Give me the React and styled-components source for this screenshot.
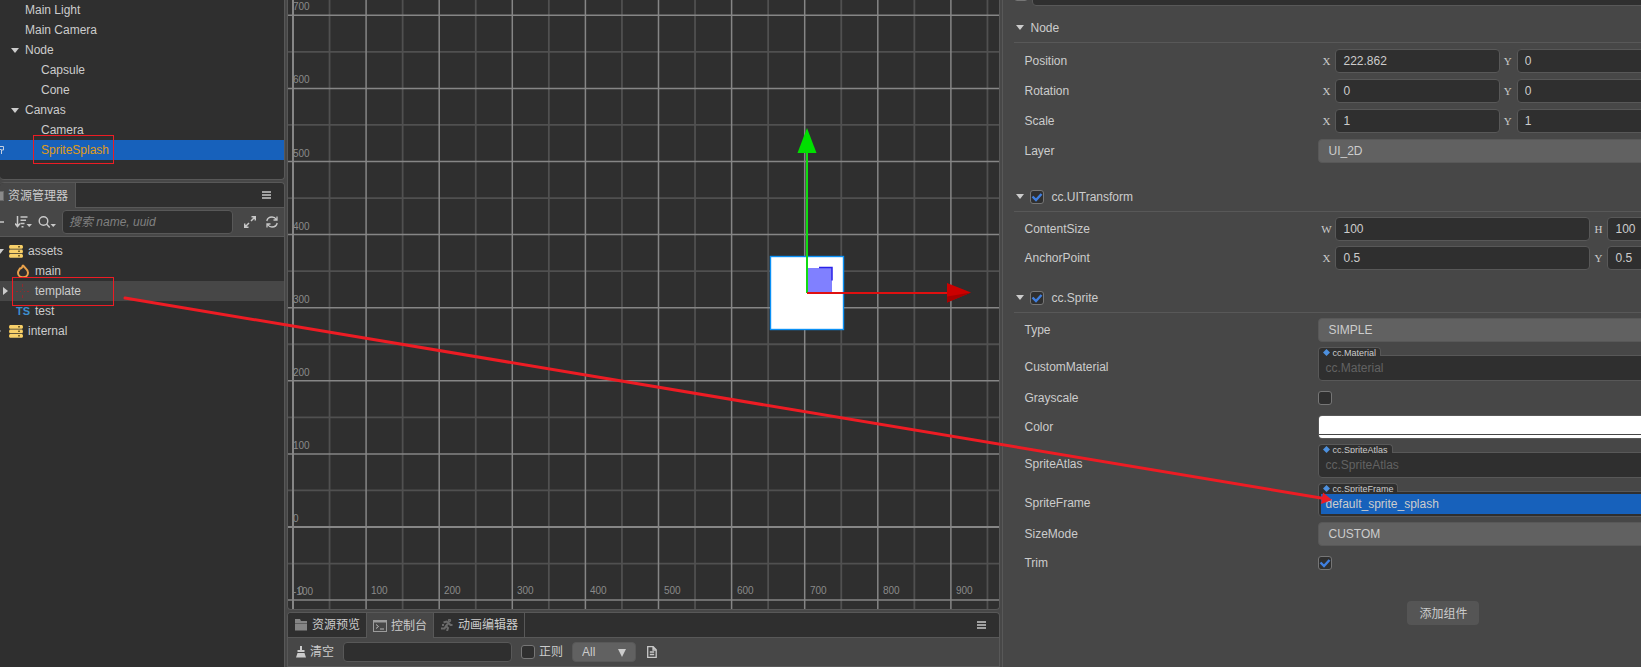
import React from 'react';
import styled, { createGlobalStyle, css } from 'styled-components';

const C = {
  dark: '#2f2f2f',
  panel: '#474747',
  line: '#585858',
  control: '#616161',
  text: '#cccccc',
  dim: '#626262',
  blue: '#1761bb',
  accent: '#3f7fe0',
  red: '#ed1c24',
};

const GlobalStyle = createGlobalStyle`
  *, *::before, *::after { box-sizing: border-box; }
  body { margin: 0; background: ${C.panel}; }
  body, input, button, select {
    font-family: "Liberation Sans", "Noto Sans CJK SC", sans-serif;
    font-size: 12px;
    color: ${C.text};
  }
  svg { display: block; flex: none; }
`;

/* ---------- Shell ---------- */

const Editor = styled.div`
  position: relative;
  display: flex;
  gap: 2px;
  height: 100vh;
  overflow: hidden;
  background: ${C.panel};
  line-height: 20px;
`;

const SideColumn = styled.div`
  flex: 0 0 285px;
  display: flex;
  flex-direction: column;
  gap: 2px;
  min-width: 0;
`;

const CenterColumn = styled.main`
  flex: 714 1 0;
  display: flex;
  flex-direction: column;
  gap: 2px;
  min-width: 0;
`;

const Panel = styled.section`
  background: ${C.dark};
  border: 1px solid ${C.line};
  border-top-width: ${(p) => (p.$openTop ? 0 : '1px')};
  border-bottom-width: ${(p) => (p.$openTop ? '1px' : 0)};
  border-left-width: ${(p) => (p.$openLeft ? 0 : '1px')};
  border-radius: ${(p) => (p.$openTop ? '0 0 4px 4px' : '4px 4px 0 0')};
  overflow: hidden;
  min-width: 0;
  ${(p) => p.$grow && css`flex: 1; min-height: 0;`}
`;

const TabBar = styled.div`
  display: flex;
  height: 25px;
  border-bottom: 1px solid ${C.line};
`;

const Tab = styled.button`
  display: flex;
  align-items: center;
  gap: 4px;
  height: ${(p) => (p.$active ? '25px' : '24px')};
  padding: 0 6px;
  border: 0;
  border-right: 1px solid ${C.line};
  background: ${(p) => (p.$active ? C.panel : C.dark)};
  line-height: 20px;
  white-space: nowrap;
  ${(p) => p.$cropped && css`margin-left: -12px; padding-right: 7px;`}
`;

const IconButton = styled.button`
  display: flex;
  align-items: center;
  padding: 0;
  border: 0;
  background: none;
  gap: 4px;
  line-height: 20px;
  white-space: nowrap;
`;

const MenuButton = styled(IconButton)`
  margin-left: auto;
  margin-right: 13px;
`;

const CreateButton = styled(IconButton)`
  margin-left: -6px;
  margin-right: 5px;
`;

const RefreshButton = styled(IconButton)`
  margin-left: 4px;
`;

const LogButton = styled(IconButton)`
  margin-left: 2px;
`;

const Toolbar = styled.div`
  display: flex;
  align-items: center;
  height: 29px;
  border-bottom: 1px solid ${C.line};
  background: ${C.panel};
`;

const AssetToolbar = styled(Toolbar)`
  padding-right: 6px;
  gap: 6px;
`;

const ConsoleToolbar = styled(Toolbar)`
  padding-left: 8px;
  gap: 9px;
`;

const TextInput = styled.input`
  height: ${(p) => (p.$small ? '20px' : '24px')};
  min-width: 0;
  padding: 0 7px;
  border: 1px solid ${C.line};
  border-radius: 4px;
  background: ${C.dark};
  outline: none;
  &::placeholder { color: #808080; font-style: italic; opacity: 1; }
`;

const SearchInput = styled(TextInput)`
  flex: 1;
  padding: 0 6px;
  margin-right: 5px;
`;

const FilterInput = styled(TextInput)`
  width: 169px;
`;

/* ---------- Trees ---------- */

const Tree = styled.ul`
  margin: 0;
  padding: ${(p) => p.$pad};
  list-style: none;
`;

const TreeRow = styled.li`
  position: relative;
  display: flex;
  align-items: center;
  height: 20px;
  gap: ${(p) => (p.$asset ? '5px' : '6px')};
  background: ${(p) => (p.$selected ? C.blue : p.$hover ? C.panel : 'transparent')};
  color: ${(p) => (p.$selected ? '#e09c16' : C.text)};
  &::before {
    content: '';
    flex: none;
    width: 0;
    margin-left: ${(p) => (p.$asset ? p.$depth * 7 - 9 : p.$depth * 16 + 5)}px;
  }
`;

const Slot = styled.span`
  display: flex;
  flex: none;
  width: ${(p) => p.$w}px;
  height: 20px;
  align-items: center;
`;

const RowMark = styled.span`
  position: absolute;
  left: 0;
  top: 6px;
`;

const ScriptBadge = styled.b`
  color: #3d8fd1;
  font-size: 11px;
`;

/* ---------- Controls ---------- */

const CheckWrap = styled.span`
  position: relative;
  display: inline-block;
  width: 14px;
  height: 14px;
  flex: none;
  svg { position: absolute; left: 0; top: 0; pointer-events: none; }
`;

const CheckInput = styled.input`
  appearance: none;
  display: block;
  width: 14px;
  height: 14px;
  margin: 0;
  border: 1px solid #767676;
  border-radius: 3px;
  background: ${C.dark};
`;

const SelectBox = styled.select`
  appearance: none;
  width: 100%;
  height: ${(p) => (p.$small ? '20px' : '24px')};
  padding: 0 9px;
  border: 1px solid ${C.line};
  border-radius: 4px;
  background: ${C.control};
  outline: none;
`;

const LevelWrap = styled.span`
  position: relative;
  width: 64px;
  svg { position: absolute; right: 10px; top: 7px; pointer-events: none; }
`;

const RegexLabel = styled.label`
  display: flex;
  align-items: center;
  gap: 4px;
`;

/* ---------- Inspector ---------- */

const Inspector = styled.aside`
  flex: 638 1 0;
  min-width: 0;
  overflow: hidden;
  border-left: 1px solid ${C.line};
`;

const InspectorBody = styled.div`
  min-width: 880px;
  padding: 0 11px;
`;

const NameBar = styled.div`
  display: flex;
  align-items: center;
  gap: 4px;
  margin-top: -18px;
  ${TextInput} { flex: 1; }
`;

const Component = styled.section`
  margin-top: ${(p) => p.$space}px;
`;

const ComponentHead = styled.header`
  display: flex;
  align-items: center;
  height: 30px;
  padding-left: 2px;
  gap: 6px;
  border-bottom: 1px solid ${C.line};
`;

const ComponentTitle = styled.label`
  padding-left: ${(p) => (p.$inset ? '1px' : 0)};
`;

const Fields = styled.div`
  display: flex;
  flex-direction: column;
  gap: ${(p) => p.$gap}px;
  padding: ${(p) => p.$gap}px 10px 0;
`;

const Field = styled.div`
  display: grid;
  grid-template-columns: 294px 1fr;
  align-items: center;
  min-height: 24px;
`;

const FieldLabel = styled.label`
  padding-top: ${(p) => (p.$tagged ? '5px' : 0)};
`;

const Vector = styled.div`
  display: grid;
  grid-template-columns: repeat(${(p) => p.$columns}, 1fr);
`;

const Axis = styled.label`
  display: grid;
  grid-template-columns: 17px 1fr;
  align-items: center;
  span {
    padding-right: 1px;
    text-align: center;
    font-family: "Liberation Serif", serif;
    font-size: 11px;
  }
`;

const AssetField = styled.div`
  display: flex;
  flex-direction: column;
  align-items: flex-start;
`;

const AssetTag = styled.span`
  position: relative;
  z-index: 1;
  display: flex;
  align-items: center;
  gap: 2px;
  height: 9px;
  padding: 1px 4px 0;
  border: 1px solid ${C.line};
  border-bottom: 0;
  border-radius: 4px 4px 0 0;
  background: ${C.dark};
  font-size: 9px;
  line-height: 12px;
  overflow: hidden;
`;

const AssetBox = styled.div`
  width: 100%;
  height: 26px;
  margin-top: -1px;
  padding: 2px;
  border: 1px solid ${C.line};
  border-radius: 0 4px 4px 4px;
  background: ${C.dark};
`;

const AssetInput = styled.input`
  display: block;
  width: 100%;
  height: 20px;
  padding: 0 4px;
  border: 0;
  outline: none;
  background: ${(p) => (p.$active ? C.blue : 'transparent')};
  &::placeholder { color: ${C.dim}; opacity: 1; }
`;

const ColorBox = styled.div`
  display: flex;
  flex-direction: column;
  gap: 1px;
  border: 1px solid ${C.line};
  border-radius: 4px;
  overflow: hidden;
`;

const ColorInput = styled.input`
  appearance: none;
  display: block;
  width: 100%;
  height: 18px;
  padding: 0;
  border: 0;
  background: #fff;
  &::-webkit-color-swatch-wrapper { padding: 0; }
  &::-webkit-color-swatch { border: 0; }
`;

const AlphaBar = styled.div`
  height: 3px;
  background: #fff;
`;

const AddRow = styled.div`
  display: flex;
  justify-content: center;
  margin-top: 26px;
`;

const AddButton = styled.button`
  height: 24px;
  padding: 0 12px 2px;
  border: 0;
  border-radius: 4px;
  background: #555555;
`;

/* ---------- Icons ---------- */

const ArrowDown = () => (
  <svg width="8" height="5"><path d="M0 0h8L4 5z" fill="#cccccc" /></svg>
);
const ArrowRight = () => (
  <svg width="5" height="8"><path d="M0 0v8l5-4z" fill="#cccccc" /></svg>
);
const Burger = () => (
  <svg width="9" height="8"><path d="M0 1h9M0 4h9M0 7h9" stroke="#c8c8c8" strokeWidth="1.6" /></svg>
);
const PlusIcon = () => (
  <svg width="10" height="10"><path d="M5 0v10M0 5h10" stroke="#c8c8c8" strokeWidth="1.6" /></svg>
);
const SortIcon = () => (
  <svg width="17" height="12" fill="none" stroke="#c8c8c8" strokeWidth="1.5">
    <path d="M2.5 0v10M0 7.5l2.5 3 2.5-3M5.5 1h7M5.5 4.3h5.5M5.5 7.5h4M6.5 10.7h2" />
    <path d="M11.5 8h5.5l-2.75 3z" fill="#c8c8c8" stroke="none" />
  </svg>
);
const SearchIcon = () => (
  <svg width="18" height="12" fill="none" stroke="#c8c8c8" strokeWidth="1.4">
    <circle cx="5.500" cy="5" r="4.3" />
    <path d="M8.5 8l3.2 3.5" />
    <path d="M12.5 8h5.5l-2.75 3z" fill="#c8c8c8" stroke="none" />
  </svg>
);
const ExpandIcon = () => (
  <svg width="12" height="12" fill="none" stroke="#c8c8c8" strokeWidth="1.5">
    <path d="M7.5.7h3.8v3.800M11 1L7 5M4.500 11.300H.7V7.500M1 11l4-4" />
  </svg>
);
const RefreshIcon = () => (
  <svg width="12" height="12" fill="none" stroke="#c8c8c8" strokeWidth="1.3">
    <path d="M.8 5C1.300 2.500 3.300 1 6 1c1.800 0 3.300.8 4.400 2.500M11 .5v3.500H7.500M11.200 7c-.5 2.500-2.500 4-5.200 4-1.800 0-3.300-.8-4.400-2.500M1 11.500V8h3.500" />
  </svg>
);
const DatabaseIcon = () => (
  <svg width="14" height="13">
    {[0, 4.5, 9].map((y) => (
      <g key={y}>
        <rect x="0" y={y + 1} width="14" height="2" fill="#d9ac3f" />
        <rect x="0.5" y={y} width="13" height="3.700" rx=".5" fill="#f7d06a" />
        <rect x="9" y={y + 1} width="2" height="1.5" fill="#7a6326" />
      </g>
    ))}
  </svg>
);
const FlameIcon = () => (
  <svg width="14" height="14" fill="none" stroke="#e9a24b" strokeWidth="2">
    <path d="M7 1C7.300 3 12 4.800 12 8.700a5 4.500 0 0 1-10 0C2 6.800 3.300 6 4 4.500 5.300 4.500 6.500 3 7 1z" />
  </svg>
);
const CrossDashes = () => (
  <svg width="14" height="14" stroke="#8e2a2e" strokeWidth="1">
    <path d="M6.500 0v3M6.500 11v3M0 7.500h2M11 7.500h2M4 7.500h1M8 7.500h1M6.500 5v1" />
  </svg>
);
const FolderIcon = () => (
  <svg width="14" height="12">
    <path d="M1 0h5l1 2h6v9.500H1z" fill="#858585" />
    <path d="M1 4.500h12" stroke="#5e5e5e" />
  </svg>
);
const ConsoleIcon = () => (
  <svg width="14" height="12" fill="none" stroke="#9c9c9c">
    <rect x=".5" y=".5" width="13" height="11" />
    <path d="M0 1.500h14" strokeWidth="2" />
    <path d="M3 4.500l2.500 2L3 8.500M7 9h4" stroke="#b5b5b5" />
  </svg>
);
const RunnerIcon = () => (
  <svg width="14" height="12" fill="none" stroke="#6a6a6a" strokeWidth="2">
    <circle cx="9.500" cy="1.500" r=".7" />
    <path d="M3.500 3.500L6.500 2.500 8.500 4 6 7l2 2-1 3M6 7L4.500 9.500H1M8.500 4l2 2h2M2 6h2" />
  </svg>
);
const BrushIcon = () => (
  <svg width="10" height="12">
    <path d="M4 0h2v4h2.500v2h-7V4H4zM1.500 7h7L10 11.500H0z" fill="#cccccc" />
  </svg>
);
const FileIcon = () => (
  <svg width="10" height="12" fill="none" stroke="#c8c8c8" strokeWidth="1.3">
    <path d="M.7.7h5.500l3 3v7.600H.7zM6 .7v3.300h3M2.800 6h4.400M2.800 8.500h4.400" />
  </svg>
);
const TabSquare = () => (
  <svg width="10" height="10"><rect x=".5" y=".5" width="9" height="9" fill="#8a8a8a" stroke="#6a6a6a" /></svg>
);
const Diamond = () => (
  <svg width="7" height="7"><path d="M3.500 0L7 3.500 3.500 7 0 3.500z" fill="#4d90de" /></svg>
);

/* ---------- Pieces ---------- */

function Checkbox({ id, checked, label }) {
  return (
    <CheckWrap>
      <CheckInput type="checkbox" id={id} defaultChecked={checked} aria-label={label} />
      {checked && (
        <svg width="14" height="14">
          <path d="M2.500 6.500L6 10l5.500-6" fill="none" stroke={C.accent} strokeWidth="2.400" />
        </svg>
      )}
    </CheckWrap>
  );
}

const hierarchy = [
  { name: 'Main Light', depth: 0 },
  { name: 'Main Camera', depth: 0 },
  { name: 'Node', depth: 0, open: true },
  { name: 'Capsule', depth: 1 },
  { name: 'Cone', depth: 1 },
  { name: 'Canvas', depth: 0, open: true },
  { name: 'Camera', depth: 1 },
  { name: 'SpriteSplash', depth: 1, selected: true },
];

const assets = [
  { name: 'assets', depth: 0, arrow: <ArrowDown />, icon: <DatabaseIcon /> },
  { name: 'main', depth: 1, icon: <FlameIcon /> },
  { name: 'template', depth: 1, arrow: <ArrowRight />, icon: <CrossDashes />, hover: true },
  { name: 'test', depth: 1, icon: <ScriptBadge>TS</ScriptBadge> },
  { name: 'internal', depth: 0, arrow: <ArrowRight />, icon: <DatabaseIcon /> },
];

const STEP = 73.1;
const ORIGIN = { x: 5, y: 527 };
const steps = Array.from({ length: 60 }, (_, i) => i);

const SceneCanvas = styled.svg`
  width: 100%;
  height: 100%;
  font-size: 10px;
  fill: #8a8a8a;
`;

function Scene() {
  const columns = steps.map((i) => ({ i, x: ORIGIN.x + (i * STEP) / 2 }));
  const rows = steps.map((i) => ({ i, y: ORIGIN.y + STEP - (i * STEP) / 2 }));
  return (
    <SceneCanvas role="img" aria-label="Scene">
      <g stroke="#505050" strokeWidth="1.8">
        {columns.filter((c) => c.i % 2).map((c) => <line key={c.i} x1={c.x} x2={c.x} y1="0" y2="100%" />)}
        {rows.filter((r) => r.i % 2).map((r) => <line key={r.i} x1="0" x2="100%" y1={r.y} y2={r.y} />)}
      </g>
      <g stroke="#868686">
        {columns.filter((c) => c.i % 2 === 0).map((c) => (
          <line key={c.i} x1={c.x} x2={c.x} y1="0" y2="100%" strokeWidth={c.i ? 1.5 : 2} />
        ))}
        {rows.filter((r) => r.i % 2 === 0).map((r) => (
          <line key={r.i} x1="0" x2="100%" y1={r.y} y2={r.y} strokeWidth={r.i === 2 ? 2 : 1.5} />
        ))}
      </g>
      {[-100, 0, 100, 200, 300, 400, 500, 600, 700].map((v) => (
        <text key={v} x="5" y={Math.round(ORIGIN.y - (v * STEP) / 100 - 5)}>{v}</text>
      ))}
      {[0, 100, 200, 300, 400, 500, 600, 700, 800, 900].map((v) => (
        <text key={v} x={Math.round(ORIGIN.x + (v * STEP) / 100 + 5)} y="594">{v}</text>
      ))}
      <rect x="482.500" y="256.500" width="73" height="73" fill="#fff" stroke="#0a90f5" strokeWidth="1.4" />
      <rect x="519" y="268" width="25" height="25" fill="#8080ff" />
      <path d="M531 267.500h13v13" fill="none" stroke="#2a22e8" strokeWidth="1.5" />
      <path d="M519 293V152" stroke="#10dc10" strokeWidth="2" />
      <path d="M519 128l9.500 25h-19z" fill="#00e000" />
      <path d="M519 293h141" stroke="#e01010" strokeWidth="2" />
      <path d="M683 292.500l-24-9.500v19.500z" fill="#cc0000" />
      <path d="M683 292.500l-24 4v6z" fill="#a80000" />
    </SceneCanvas>
  );
}

function VectorField({ label, columns, values }) {
  return (
    <Field>
      <FieldLabel as="span">{label}</FieldLabel>
      <Vector $columns={columns}>
        {values.map(([axis, value]) => (
          <Axis key={axis}>
            <span>{axis}</span>
            <TextInput defaultValue={value} aria-label={`${label} ${axis}`} />
          </Axis>
        ))}
      </Vector>
    </Field>
  );
}

function SelectField({ label, value }) {
  return (
    <Field>
      <FieldLabel htmlFor={label}>{label}</FieldLabel>
      <SelectBox id={label} defaultValue={value}><option>{value}</option></SelectBox>
    </Field>
  );
}

function AssetRefField({ label, type, value }) {
  return (
    <Field>
      <FieldLabel htmlFor={label} $tagged>{label}</FieldLabel>
      <AssetField>
        <AssetTag><Diamond />{type}</AssetTag>
        <AssetBox>
          <AssetInput id={label} readOnly placeholder={type} value={value || ''} $active={!!value} />
        </AssetBox>
      </AssetField>
    </Field>
  );
}

function CheckField({ label, checked }) {
  return (
    <Field>
      <FieldLabel htmlFor={label}>{label}</FieldLabel>
      <Checkbox id={label} checked={checked} />
    </Field>
  );
}

function ComponentPanel({ title, toggle, space, gap, children }) {
  return (
    <Component $space={space}>
      <ComponentHead>
        <ArrowDown />
        {toggle && <Checkbox id={title} checked />}
        <ComponentTitle as={toggle ? 'label' : 'span'} htmlFor={toggle ? title : undefined} $inset={toggle}>
          {title}
        </ComponentTitle>
      </ComponentHead>
      <Fields $gap={gap}>{children}</Fields>
    </Component>
  );
}

/* ---------- Callouts drawn over the editor ---------- */

const Callouts = styled.svg`
  position: absolute;
  left: 0;
  top: 0;
  width: 100%;
  height: 100%;
  pointer-events: none;
`;

export default function App() {
  return (
    <Editor>
      <GlobalStyle />
      <SideColumn>
        <Panel $openTop $openLeft>
          <Tree $pad="0 0 19px">
            {hierarchy.map((n) => (
              <TreeRow key={n.name} $depth={n.depth} $selected={n.selected}>
                {n.selected && (
                  <RowMark>
                    <svg width="5" height="8" fill="none" stroke="#c4cfe0">
                      <path d="M0 .500h3.500v3.500h-2v4M0 3.500h1.500" />
                    </svg>
                  </RowMark>
                )}
                <Slot $w={8}>{n.open && <ArrowDown />}</Slot>
                {n.name}
              </TreeRow>
            ))}
          </Tree>
        </Panel>
        <Panel $grow $openLeft>
          <TabBar>
            <Tab $active $cropped><TabSquare />资源管理器</Tab>
            <MenuButton aria-label="Menu"><Burger /></MenuButton>
          </TabBar>
          <AssetToolbar>
            <CreateButton aria-label="Create"><PlusIcon /></CreateButton>
            <IconButton aria-label="Sort"><SortIcon /></IconButton>
            <IconButton aria-label="Search type"><SearchIcon /></IconButton>
            <SearchInput placeholder="搜索 name, uuid" aria-label="Search" />
            <IconButton aria-label="Expand"><ExpandIcon /></IconButton>
            <RefreshButton aria-label="Refresh"><RefreshIcon /></RefreshButton>
          </AssetToolbar>
          <Tree $pad="4px 0 0">
            {assets.map((n) => (
              <TreeRow key={n.name} $asset $depth={n.depth} $hover={n.hover}>
                <Slot $w={8}>{n.arrow}</Slot>
                <Slot $w={14}>{n.icon}</Slot>
                {n.name}
              </TreeRow>
            ))}
          </Tree>
        </Panel>
      </SideColumn>

      <CenterColumn>
        <Panel $grow $openTop><Scene /></Panel>
        <Panel>
          <TabBar>
            <Tab><FolderIcon />资源预览</Tab>
            <Tab $active><ConsoleIcon />控制台</Tab>
            <Tab><RunnerIcon />动画编辑器</Tab>
            <MenuButton aria-label="Menu"><Burger /></MenuButton>
          </TabBar>
          <ConsoleToolbar>
            <IconButton><BrushIcon />清空</IconButton>
            <FilterInput $small aria-label="Filter" />
            <RegexLabel><Checkbox id="regex" />正则</RegexLabel>
            <LevelWrap>
              <SelectBox $small aria-label="Level" defaultValue="All"><option>All</option></SelectBox>
              <svg width="8" height="8"><path d="M0 0h8L4 8z" fill="#cccccc" /></svg>
            </LevelWrap>
            <LogButton aria-label="Open log"><FileIcon /></LogButton>
          </ConsoleToolbar>
        </Panel>
      </CenterColumn>

      <Inspector>
        <InspectorBody>
          <NameBar>
            <Checkbox id="node-active" label="Active" />
            <TextInput aria-label="Node name" />
          </NameBar>
          <ComponentPanel title="Node" space={7} gap={6}>
            <VectorField label="Position" columns={3} values={[['X', '222.862'], ['Y', '0']]} />
            <VectorField label="Rotation" columns={3} values={[['X', '0'], ['Y', '0']]} />
            <VectorField label="Scale" columns={3} values={[['X', '1'], ['Y', '1']]} />
            <SelectField label="Layer" value="UI_2D" />
          </ComponentPanel>
          <ComponentPanel title="cc.UITransform" toggle space={19} gap={5}>
            <VectorField label="ContentSize" columns={2} values={[['W', '100'], ['H', '100']]} />
            <VectorField label="AnchorPoint" columns={2} values={[['X', '0.5'], ['Y', '0.5']]} />
          </ComponentPanel>
          <ComponentPanel title="cc.Sprite" toggle space={13} gap={5}>
            <SelectField label="Type" value="SIMPLE" />
            <AssetRefField label="CustomMaterial" type="cc.Material" />
            <CheckField label="Grayscale" />
            <Field>
              <FieldLabel htmlFor="Color">Color</FieldLabel>
              <ColorBox>
                <ColorInput type="color" id="Color" defaultValue="#ffffff" />
                <AlphaBar />
              </ColorBox>
            </Field>
            <AssetRefField label="SpriteAtlas" type="cc.SpriteAtlas" />
            <AssetRefField label="SpriteFrame" type="cc.SpriteFrame" value="default_sprite_splash" />
            <SelectField label="SizeMode" value="CUSTOM" />
            <CheckField label="Trim" checked />
          </ComponentPanel>
          <AddRow><AddButton>添加组件</AddButton></AddRow>
        </InspectorBody>
      </Inspector>

      <Callouts aria-hidden="true">
        <g fill="none" stroke={C.red}>
          <rect x="33.500" y="135.500" width="80" height="28" />
          <rect x="12.500" y="277.500" width="101" height="28" />
          <path d="M125 298L1324 498.500" strokeWidth="3" strokeLinecap="round" />
        </g>
        <path d="M1332 500l-9-7.500-2 11.500z" fill={C.red} />
      </Callouts>
    </Editor>
  );
}
